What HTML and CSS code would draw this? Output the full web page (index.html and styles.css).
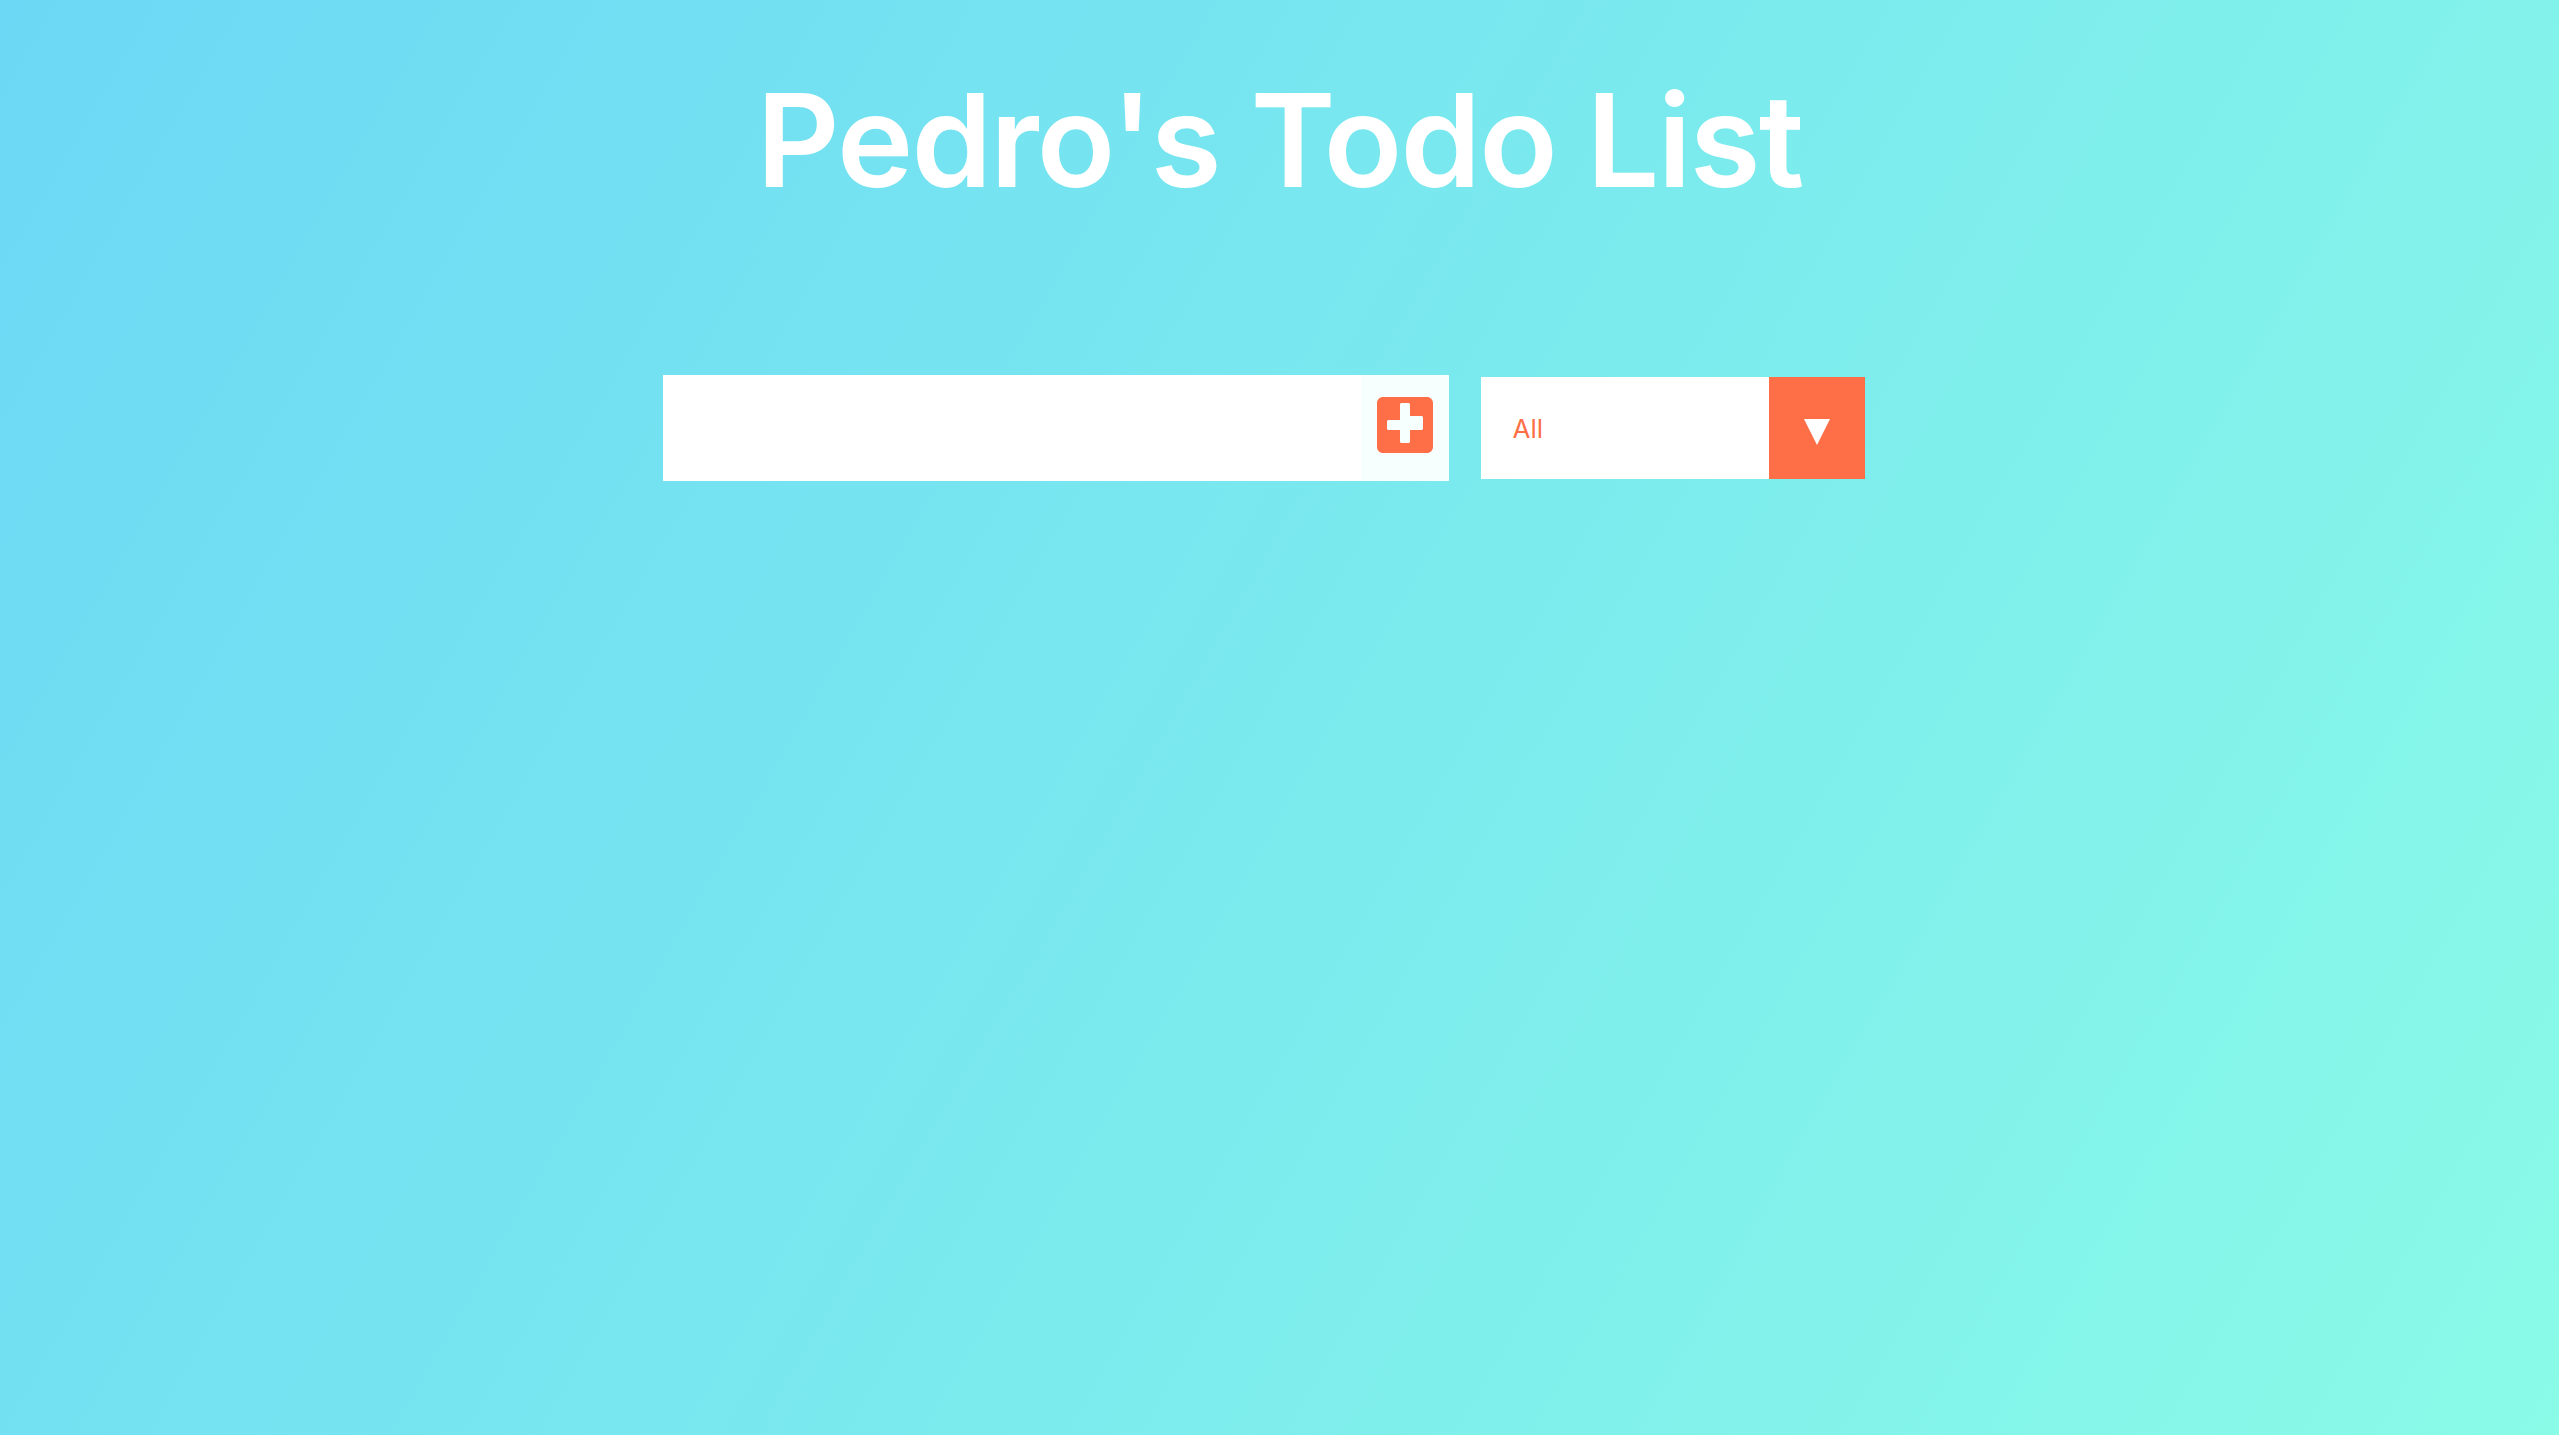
FILE: index.html
```html
<!DOCTYPE html>
<html lang="en">
<head>
<meta charset="UTF-8">
<title>Pedro's Todo List</title>
<link rel="stylesheet" href="styles.css">
</head>
<body>
<header class="header">
  <h1 class="title">Pedro's Todo List</h1>
</header>
<form class="todo-form">
  <div class="input-group">
    <input type="text" class="todo-input">
    <button type="button" class="todo-button" aria-label="Add">
      <svg class="plus-icon" viewBox="0 32 448 448" width="56" height="56">
        <path fill="#ff6f47" d="M400 32H48C21.5 32 0 53.5 0 80v352c0 26.5 21.5 48 48 48h352c26.5 0 48-21.5 48-48V80c0-26.5-21.5-48-48-48zm-32 252c0 6.6-5.4 12-12 12h-92v92c0 6.6-5.4 12-12 12h-56c-6.6 0-12-5.4-12-12v-92H92c-6.6 0-12-5.4-12-12v-56c0-6.6 5.4-12 12-12h92V92c0-6.6 5.4-12 12-12h56c6.6 0 12 5.4 12 12v92h92c6.6 0 12 5.4 12 12v56z"/>
      </svg>
    </button>
  </div>
  <div class="select">
    <select class="filter-todo" name="todos">
      <option value="all">All</option>
      <option value="completed">Completed</option>
      <option value="uncompleted">Uncompleted</option>
    </select>
    <span class="select-arrow">
      <svg viewBox="0 0 26 26" width="26" height="26"><polygon points="0,0 26,0 13,26" fill="#ffffff"/></svg>
    </span>
  </div>
</form>
<div class="todo-container">
  <ul class="todo-list"></ul>
</div>
</body>
</html>
```
FILE: styles.css
```css
* {
  margin: 0;
  padding: 0;
  box-sizing: border-box;
}

body {
  min-height: 100vh;
  background: linear-gradient(120deg, #6cd8f5, #89fbe7);
  font-family: "Inter", "Liberation Sans", sans-serif;
  color: #ffffff;
}

.header {
  display: flex;
  justify-content: center;
  padding-top: 76px;
}

.title {
  font-size: 129px;
  font-weight: 600;
  line-height: 1;
  color: #ffffff;
  letter-spacing: -1.8px;
}

.todo-form {
  display: flex;
  justify-content: center;
  align-items: center;
  margin-top: 140px;
}

.input-group {
  display: flex;
  height: 106px;
}

.todo-input {
  width: 698px;
  height: 106px;
  border: none;
  outline: none;
  background: #ffffff;
  padding: 16px;
  font-size: 52px;
  font-family: "Inter", "Liberation Sans", sans-serif;
}

.todo-button {
  width: 88px;
  height: 106px;
  border: none;
  background: #f7fffe;
  display: flex;
  align-items: center;
  justify-content: center;
  padding-bottom: 6px;
  cursor: pointer;
}

.plus-icon {
  display: block;
}

.select {
  position: relative;
  margin: 32px;
  width: 384px;
  height: 102px;
  overflow: hidden;
}

.filter-todo {
  appearance: none;
  -webkit-appearance: none;
  border: none;
  outline: none;
  width: 100%;
  height: 100%;
  background: #ffffff;
  color: #ff6f47;
  font-family: "Inter", "Liberation Sans", sans-serif;
  font-size: 26px;
  padding: 0 32px;
  cursor: pointer;
}

.select-arrow {
  position: absolute;
  top: 0;
  right: 0;
  width: 96px;
  height: 100%;
  background: #ff6f47;
  display: flex;
  align-items: center;
  justify-content: center;
  padding-top: 8px;
  pointer-events: none;
}

.select-arrow svg {
  display: block;
}

.todo-container {
  display: flex;
  justify-content: center;
}

.todo-list {
  list-style: none;
}
```
